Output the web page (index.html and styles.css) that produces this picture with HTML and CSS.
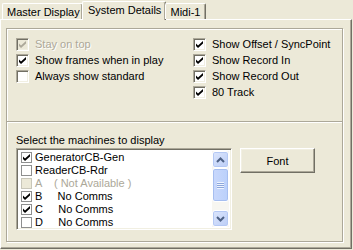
FILE: index.html
```html
<!DOCTYPE html>
<html>
<head>
<meta charset="utf-8">
<link rel="stylesheet" href="styles.css">
</head>
<body>
<div class="dialog">
  <div class="tabs">
    <div class="tab tab-master">Master Display</div>
    <div class="tab active">System Details</div>
    <div class="tab tab-midi">Midi-1</div>
  </div>
  <div class="panel">
    <div class="group">
      <div class="options">
        <div class="col">
          <label class="opt disabled"><span class="cb checked"><svg viewBox="0 0 7 7" width="7" height="7"><polygon points="0,2.5 2,4.5 7,0 7,2.5 2,7 0,5"/></svg></span>Stay on top</label>
          <label class="opt"><span class="cb checked"><svg viewBox="0 0 7 7" width="7" height="7"><polygon points="0,2.5 2,4.5 7,0 7,2.5 2,7 0,5"/></svg></span>Show frames when in play</label>
          <label class="opt"><span class="cb"></span>Always show standard</label>
        </div>
        <div class="col">
          <label class="opt"><span class="cb checked"><svg viewBox="0 0 7 7" width="7" height="7"><polygon points="0,2.5 2,4.5 7,0 7,2.5 2,7 0,5"/></svg></span>Show Offset / SyncPoint</label>
          <label class="opt"><span class="cb checked"><svg viewBox="0 0 7 7" width="7" height="7"><polygon points="0,2.5 2,4.5 7,0 7,2.5 2,7 0,5"/></svg></span>Show Record In</label>
          <label class="opt"><span class="cb checked"><svg viewBox="0 0 7 7" width="7" height="7"><polygon points="0,2.5 2,4.5 7,0 7,2.5 2,7 0,5"/></svg></span>Show Record Out</label>
          <label class="opt"><span class="cb checked"><svg viewBox="0 0 7 7" width="7" height="7"><polygon points="0,2.5 2,4.5 7,0 7,2.5 2,7 0,5"/></svg></span>80 Track</label>
        </div>
      </div>
      <div class="sep"></div>
      <div class="machines">
        <div class="caption">Select the machines to display</div>
        <div class="machine-row">
          <div class="listbox">
            <ul class="items">
              <li class="item"><span class="lcb"><svg viewBox="0 0 7 7" width="7" height="7"><polygon points="0,2.5 2,4.5 7,0 7,2.5 2,7 0,5"/></svg></span>GeneratorCB-Gen</li>
              <li class="item"><span class="lcb"></span>ReaderCB-Rdr</li>
              <li class="item disabled"><span class="lcb"></span>A    ( Not Available )</li>
              <li class="item"><span class="lcb"><svg viewBox="0 0 7 7" width="7" height="7"><polygon points="0,2.5 2,4.5 7,0 7,2.5 2,7 0,5"/></svg></span>B     No Comms</li>
              <li class="item"><span class="lcb"><svg viewBox="0 0 7 7" width="7" height="7"><polygon points="0,2.5 2,4.5 7,0 7,2.5 2,7 0,5"/></svg></span>C     No Comms</li>
              <li class="item"><span class="lcb"></span>D     No Comms</li>
            </ul>
            <div class="scrollbar">
              <div class="sb-btn"><svg viewBox="0 0 9 6" width="9" height="6"><polyline points="1,5 4.5,1.5 8,5" /></svg></div>
              <div class="sb-thumb"><span class="grip"></span></div>
              <div class="sb-track"></div>
              <div class="sb-btn"><svg viewBox="0 0 9 6" width="9" height="6"><polyline points="1,1 4.5,4.5 8,1" /></svg></div>
            </div>
          </div>
          <button class="btn">Font</button>
        </div>
      </div>
    </div>
  </div>
</div>
</body>
</html>
```
FILE: styles.css
```css
* { box-sizing: border-box; }
html, body {
  margin: 0;
  padding: 0;
  background: #ECE9D8;
}
body {
  width: 353px;
  height: 250px;
  overflow: hidden;
  font-family: "Liberation Sans", Arial, sans-serif;
  font-size: 11px;
  color: #000;
}
.dialog {
  display: flex;
  flex-direction: column;
}
.tabs {
  display: flex;
  align-items: flex-end;
  height: 19px;
  padding-left: 2px;
  position: relative;
  z-index: 1;
}
.tab {
  height: 16px;
  line-height: 14px;
  padding: 1px 4px 0 4px;
  border-top: 1px solid #fff;
  border-left: 1px solid #fff;
  border-right: 1px solid #716F64;
  border-radius: 2px 2px 0 0;
  box-shadow: inset -1px 0 #ACA899;
  white-space: nowrap;
  text-align: center;
}
.tab-master { width: 81px; }
.tab-midi { width: 41px; }
.tab.active {
  height: 19px;
  width: 84px;
  margin: 0 -1px -1px -1px;
  padding: 1px 5px 0 5px;
  background: #ECE9D8;
  line-height: 14px;
}
.panel {
  width: 352px;
  height: 230px;
  border-top: 1px solid #fff;
  border-left: 1px solid #fff;
  border-right: 1px solid #716F64;
  border-bottom: 1px solid #716F64;
  box-shadow: inset -1px -1px #ACA899;
  padding: 8px 8px 6px 5px;
  display: flex;
}
.group {
  flex: 1;
  border: 1px solid #ACA899;
  box-shadow: inset 1px 1px #fff, 1px 1px 0 #fff;
  padding: 7px 0 0 9px;
  display: flex;
  flex-direction: column;
}
.options {
  display: grid;
  grid-template-columns: 177px 1fr;
}
.col {
  display: flex;
  flex-direction: column;
}
.opt {
  height: 16px;
  display: flex;
  align-items: center;
  gap: 6px;
  white-space: nowrap;
}
.opt.disabled {
  color: #ACA899;
  text-shadow: 1px 1px 0 #fff;
}
.cb {
  width: 13px;
  height: 13px;
  flex: none;
  background: #fff;
  border: 1px solid;
  border-color: #ACA899 #fff #fff #ACA899;
  box-shadow: inset 1px 1px #716F64, inset -1px -1px #F1EFE2;
  display: flex;
  align-items: center;
  justify-content: center;
}
.cb svg, .lcb svg { display: block; fill: #000; }
.opt.disabled .cb { background: #ECE9D8; }
.opt.disabled .cb svg { fill: #ACA899; }
.sep {
  height: 2px;
  margin: 21px 0 0 -9px;
  border-top: 1px solid #ACA899;
  border-bottom: 1px solid #fff;
}
.machines {
  padding-top: 11px;
}
.caption {
  height: 13px;
  line-height: 13px;
  white-space: nowrap;
}
.machine-row {
  display: flex;
  align-items: flex-start;
  gap: 8px;
  margin-top: 1px;
}
.listbox {
  width: 216px;
  height: 82px;
  background: #fff;
  border: 1px solid;
  border-color: #ACA899 #fff #fff #ACA899;
  box-shadow: inset 1px 1px #716F64, inset -1px -1px #F1EFE2;
  padding: 2px;
  display: flex;
}
.items {
  list-style: none;
  margin: 0;
  padding: 0;
  flex: 1;
}
.item {
  height: 13px;
  display: flex;
  align-items: center;
  gap: 3px;
  padding-left: 2px;
  white-space: pre;
  line-height: 13px;
}
.item.disabled { color: #ACA899; }
.lcb {
  width: 11px;
  height: 11px;
  flex: none;
  border: 1px solid #8E8F8F;
  background: #fff;
  display: flex;
  align-items: center;
  justify-content: center;
}
.item.disabled .lcb {
  background: #ECE9D8;
  border-color: #C9C7BA;
}
.scrollbar {
  width: 17px;
  flex: none;
  display: flex;
  flex-direction: column;
  background: #F7F6F1;
}
.sb-btn {
  height: 17px;
  flex: none;
  border: 1px solid #fff;
  border-radius: 3px;
  background: linear-gradient(135deg, #DCE6FD, #BBCDF6);
  box-shadow: inset 0 0 0 1px #B4C8F4;
  display: flex;
  align-items: center;
  justify-content: center;
}
.sb-btn svg polyline {
  fill: none;
  stroke: #4D6185;
  stroke-width: 2;
}
.sb-thumb {
  height: 34px;
  flex: none;
  border: 1px solid #fff;
  border-radius: 3px;
  background: linear-gradient(90deg, #C9D8FC, #BAD0FB);
  box-shadow: inset 0 0 0 1px #A6BEF0;
  display: flex;
  align-items: center;
  justify-content: center;
}
.grip {
  width: 7px;
  height: 7px;
  background: repeating-linear-gradient(180deg, #EEF4FE 0 1px, #8CA6DB 1px 2px);
}
.sb-track { flex: 1; }
.btn {
  width: 75px;
  height: 25px;
  margin: 0;
  padding: 0;
  font: inherit;
  color: #000;
  background: #ECE9D8;
  border: 1px solid;
  border-color: #fff #716F64 #716F64 #fff;
  box-shadow: inset -1px -1px #ACA899, inset 1px 1px #F1EFE2;
  border-radius: 0;
}
```
